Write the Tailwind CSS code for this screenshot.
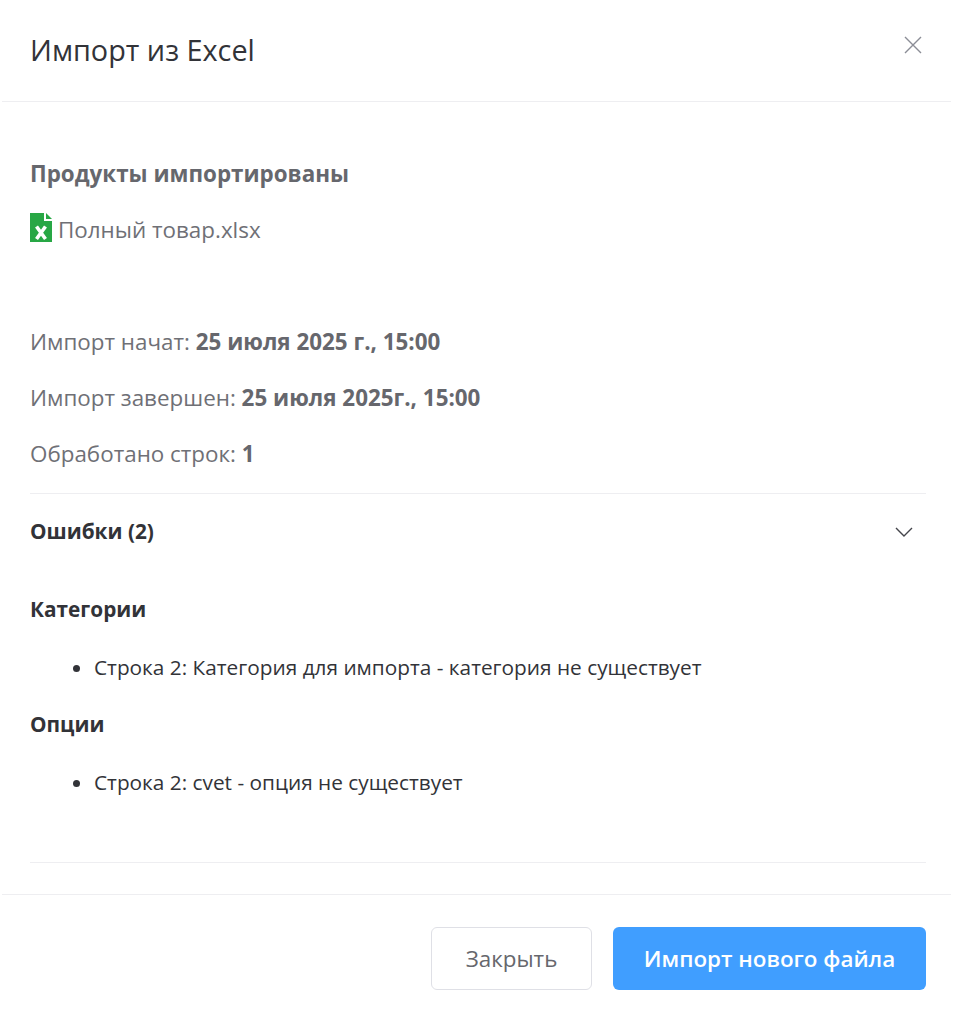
<!DOCTYPE html>
<html lang="ru"><head><meta charset="utf-8"><script src="https://cdn.jsdelivr.net/npm/@tailwindcss/browser@4"></script></head>
<body class="bg-white font-['Open_Sans',sans-serif] h-[1017px] overflow-hidden">
<div class="mx-[2px] w-[949px]">
  <header class="relative h-[102px] border-b border-[#eeeef1] pl-[28px] pt-[28px]">
    <h1 class="text-[28.8px] leading-[43px] text-[#323338]">Импорт из Excel</h1>
    <button class="absolute right-[29px] top-[36px] text-[#8b8d96]"><svg width="18" height="18" viewBox="0 0 18 18" fill="none" stroke="currentColor" stroke-width="1.4"><path d="M1 1 17 17M17 1 1 17"/></svg></button>
  </header>
  <main class="mx-[28px] w-[896px]">
    <h2 class="mt-[55px] text-[22.4px] leading-[34px] font-bold text-[#66676d]">Продукты импортированы</h2>
    <div class="mt-[23px] flex items-start gap-[6px] h-[32px] text-[22.4px] leading-[32px] text-[#6f7076]">
      <svg width="22" height="29" viewBox="0 0 22 29" class="shrink-0 mt-[-1px]"><path fill="#28a745" d="M0 0H14V8H22V29H0Z"/><path fill="#28a745" d="M16 0 22 6H16Z"/><path fill="none" stroke="#fff" stroke-width="3.6" d="M6.5 13.5 15.5 26M15.5 13.5 6.5 26"/></svg>
      <span>Полный товар.xlsx</span>
    </div>
    <div class="mt-[79px] flex flex-col gap-[22px] text-[22.4px] leading-[34px] text-[#6f7076]">
      <p>Импорт начат: <b class="font-bold text-[#66676d]">25 июля 2025 г., 15:00</b></p>
      <p>Импорт завершен: <b class="font-bold text-[#66676d]">25 июля 2025г., 15:00</b></p>
      <p>Обработано строк: <b class="font-bold text-[#66676d]">1</b></p>
    </div>
    <section class="mt-[22px] border-t border-b border-[#eeeef1] h-[370px]">
      <div class="flex items-center justify-between h-[76px]">
        <h3 class="text-[20.8px] font-bold text-[#323338]">Ошибки (2)</h3>
        <svg class="mr-[13px]" width="18" height="10" viewBox="0 0 18 10" fill="none" stroke="#44454b" stroke-width="1.4"><path d="M1 1 9 9 17 1"/></svg>
      </div>
      <div class="text-[#323338] text-[20.8px] leading-[31px]">
        <h4 class="mt-[24px] font-bold">Категории</h4>
        <ul class="mt-[27px] pl-[64px] list-disc"><li>Строка 2: Категория для импорта - категория не существует</li></ul>
        <h4 class="mt-[26px] font-bold">Опции</h4>
        <ul class="mt-[27px] pl-[64px] list-disc"><li>Строка 2: cvet - опция не существует</li></ul>
      </div>
    </section>
  </main>
  <footer class="mt-[31px] border-t border-[#eeeef1] pt-[32px] pr-[25px] flex justify-end gap-[21px]">
    <button class="w-[161px] h-[63px] rounded-[6px] border border-[#dfe0e6] bg-white text-[22.4px] font-medium text-[#66676d]">Закрыть</button>
    <button class="w-[313px] h-[63px] rounded-[6px] bg-[#409eff] text-[22.4px] font-[550] text-white">Импорт нового файла</button>
  </footer>
</div>
</body></html>
